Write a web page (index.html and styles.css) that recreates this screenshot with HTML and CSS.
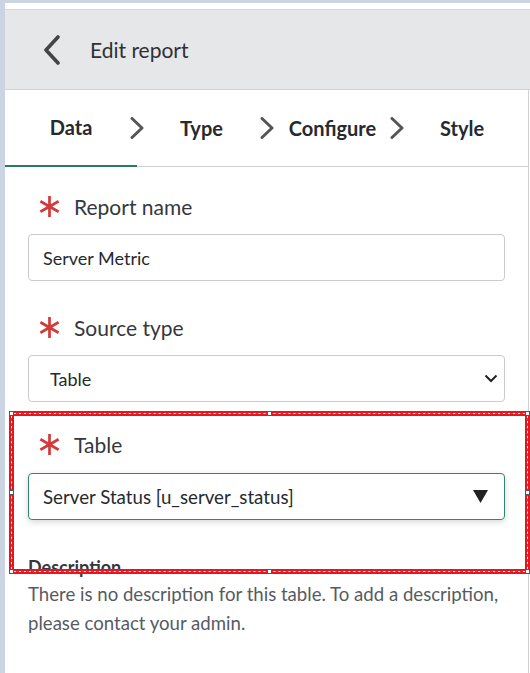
FILE: index.html
```html
<!DOCTYPE html>
<html lang="en">
<head>
  <meta charset="UTF-8">
  <meta name="viewport" content="width=device-width, initial-scale=1.0">
  <title>Edit report</title>
  <link rel="stylesheet" href="styles.css">
</head>
<body>
  <div class="panel">
    <div class="header">
      <svg class="back" width="20" height="30" viewBox="0 0 20 30">
        <path d="M16 2 L4 15 L16 28" fill="none" stroke="#444" stroke-width="3.6" stroke-linecap="round" stroke-linejoin="round"/>
      </svg>
      <h1>Edit report</h1>
    </div>

    <div class="tabs">
      <div class="tab active tab-data">Data</div>
      <svg class="step" width="14" height="22" viewBox="0 0 14 22">
        <path d="M2 1.5 L12 11 L2 20.5" fill="none" stroke="#555" stroke-width="3" stroke-linecap="round" stroke-linejoin="round"/>
      </svg>
      <div class="tab tab-type">Type</div>
      <svg class="step" width="14" height="22" viewBox="0 0 14 22">
        <path d="M2 1.5 L12 11 L2 20.5" fill="none" stroke="#555" stroke-width="3" stroke-linecap="round" stroke-linejoin="round"/>
      </svg>
      <div class="tab tab-configure">Configure</div>
      <svg class="step" width="14" height="22" viewBox="0 0 14 22">
        <path d="M2 1.5 L12 11 L2 20.5" fill="none" stroke="#555" stroke-width="3" stroke-linecap="round" stroke-linejoin="round"/>
      </svg>
      <div class="tab tab-style">Style</div>
    </div>

    <div class="form">
      <div class="field">
        <label class="label">
          <svg class="req" width="23" height="23" viewBox="0 0 22 22">
            <path d="M11 1 V21 M2.3 6 L19.7 16 M2.3 16 L19.7 6" stroke="#d23b3b" stroke-width="2.6"/>
          </svg>
          Report name
        </label>
        <div class="input">Server Metric</div>
      </div>

      <div class="field">
        <label class="label">
          <svg class="req" width="23" height="23" viewBox="0 0 22 22">
            <path d="M11 1 V21 M2.3 6 L19.7 16 M2.3 16 L19.7 6" stroke="#d23b3b" stroke-width="2.6"/>
          </svg>
          Source type
        </label>
        <div class="input select">
          <span>Table</span>
          <svg width="14" height="9" viewBox="0 0 14 9">
            <path d="M1.5 1.5 L7 7 L12.5 1.5" fill="none" stroke="#222" stroke-width="2"/>
          </svg>
        </div>
      </div>

      <div class="field selected">
        <label class="label">
          <svg class="req" width="23" height="23" viewBox="0 0 22 22">
            <path d="M11 1 V21 M2.3 6 L19.7 16 M2.3 16 L19.7 6" stroke="#d23b3b" stroke-width="2.6"/>
          </svg>
          Table
        </label>
        <div class="input picker">
          <span>Server Status [u_server_status]</span>
          <svg class="caret" width="15" height="13" viewBox="0 0 15 13">
            <polygon points="0,0 15,0 7.5,13" fill="#222"/>
          </svg>
        </div>

        <div class="selection">
          <span class="handle h-tl"></span>
          <span class="handle h-tm"></span>
          <span class="handle h-tr"></span>
          <span class="handle h-ml"></span>
          <span class="handle h-mr"></span>
          <span class="handle h-bl"></span>
          <span class="handle h-bm"></span>
          <span class="handle h-br"></span>
        </div>
      </div>

      <div class="description">
        <h3>Description</h3>
        <p>There is no description for this table. To add a description, please contact your admin.</p>
      </div>
    </div>
  </div>
</body>
</html>
```

FILE: styles.css
```css
body {
  margin: 0;
  background-color: #cbd4e3;
  font-family: Lato, "Liberation Sans", sans-serif;
  color: #2a2d31;
}

.panel {
  margin: 3px 0 0 5px;
  min-height: 670px;
  padding-top: 6px;
  background: #fff;
}

.header {
  display: flex;
  align-items: center;
  height: 79px;
  padding-left: 37px;
  border-top: 1px solid #d6d7d9;
  border-bottom: 1px solid #cfd0d2;
  background-color: #e6e7e9;
}

.header h1 {
  margin: 0 0 0 28px;
  font-size: 21px;
  font-weight: 400;
  color: #2e3136;
}

.tabs {
  display: flex;
  align-items: center;
  height: 76px;
  margin-right: 1px;
  border-right: 1px solid #cfd0d2;
  border-bottom: 1px solid #cfd0d2;
}

.tab {
  height: 76px;
  line-height: 76px;
  text-align: center;
  font-size: 20px;
  font-weight: 700;
  color: #26292e;
  box-sizing: border-box;
}

.tab.active {
  border-bottom: 2px solid #2c7a66;
  margin-bottom: -1px;
  height: 77px;
  line-height: 75px;
}

.tab-data { width: 132px; }
.tab-type { width: 115px; }
.tab-configure { width: 117px; }
.tab-style { width: 116px; }

.step { flex: none; }
.tab-data + .step { margin-left: -7px; }
.tab-type + .step { margin-left: 1px; }
.tab-configure + .step { margin-left: -1px; }

.form {
  padding: 24px 23px 0 23px;
  margin-right: 1px;
  border-right: 1px solid #cfd0d2;
  min-height: 500px;
}

.field {
  margin-bottom: 31px;
}

.label {
  display: flex;
  align-items: center;
  height: 30px;
  margin-bottom: 13px;
  padding-left: 10px;
  font-size: 21px;
  color: #34383e;
}

.req {
  margin-right: 13px;
}

.input {
  display: flex;
  align-items: center;
  height: 47px;
  box-sizing: border-box;
  padding: 0 14px;
  border: 1px solid #cbcbcb;
  border-radius: 4px;
  font-size: 18px;
  color: #26292e;
}

.select {
  justify-content: space-between;
  padding: 0 6px 0 21px;
}

.selected {
  position: relative;
  margin-top: -4px;
  margin-bottom: 35px;
}

.selected .label {
  margin-bottom: 14px;
}

.picker {
  justify-content: space-between;
  padding-right: 16px;
  font-size: 18.7px;
  border-color: #2e8572;
  box-shadow: 0 2px 6px rgba(0, 0, 0, 0.16);
}

.selection {
  position: absolute;
  top: -18px;
  left: -19px;
  right: -25px;
  bottom: -54px;
  border: 2px solid #e4161f;
  box-shadow: inset 0 0 0 1px #fff, inset 0 0 0 3px #e4161f;
  pointer-events: none;
}

.selection::after {
  content: "";
  position: absolute;
  inset: 0;
  border: 1px dashed #2d6fd4;
}

.handle {
  position: absolute;
  width: 3px;
  height: 3px;
  border: 1px solid #555;
  background: #fff;
  z-index: 1;
}

.h-tl { top: -2px; left: -2px; }
.h-tm { top: -2px; left: calc(50% - 2.5px); }
.h-tr { top: -2px; right: -2px; }
.h-ml { top: calc(50% - 2.5px); left: -2px; }
.h-mr { top: calc(50% - 2.5px); right: -2px; }
.h-bl { bottom: -2px; left: -2px; }
.h-bm { bottom: -2px; left: calc(50% - 2.5px); }
.h-br { bottom: -2px; right: -2px; }

.description h3 {
  margin: 0 0 1px;
  font-size: 18px;
  font-weight: 700;
  color: #34383e;
  line-height: 24px;
}

.description p {
  margin: 0;
  font-size: 18.6px;
  line-height: 29px;
  color: #565b62;
}
```
